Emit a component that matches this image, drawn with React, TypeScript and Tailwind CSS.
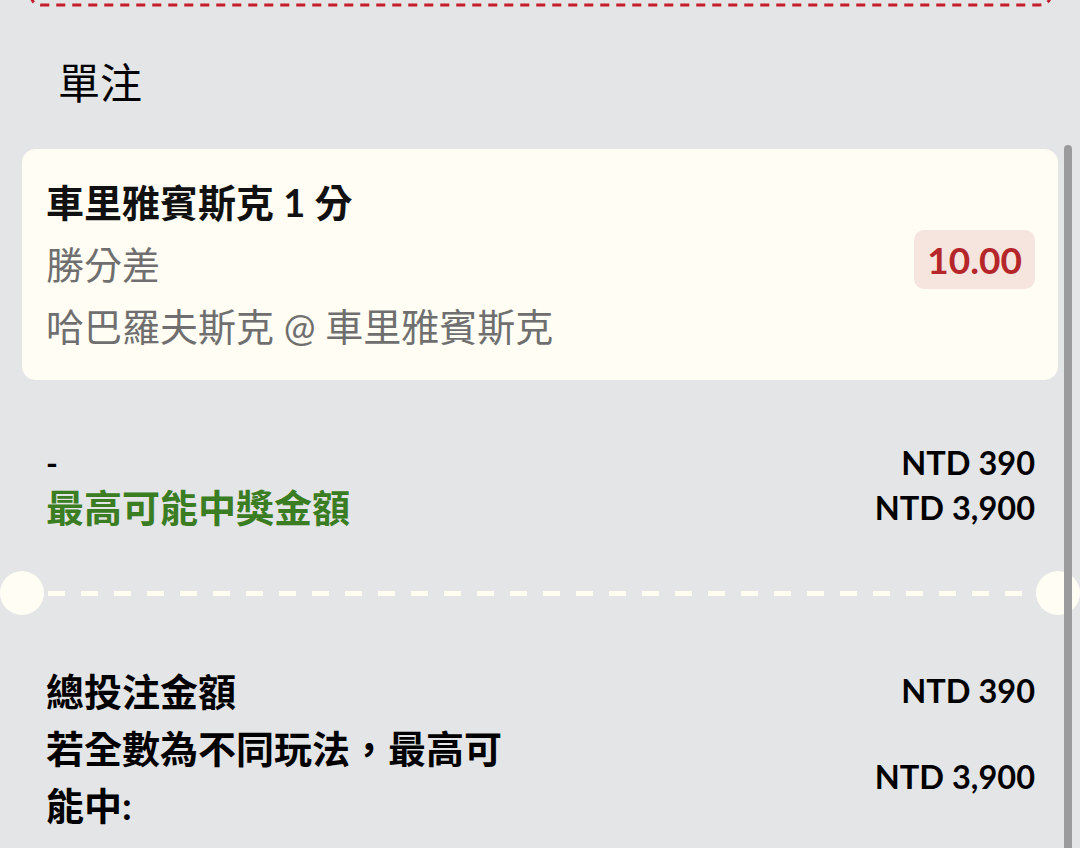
import React from "react";

const FONT = "font-['Lato','Noto_Sans_CJK_TC',sans-serif]";

export default function App() {
  return (
    <div className={`relative w-[1080px] h-[848px] overflow-hidden bg-[#e4e5e7] ${FONT}`}>
      {/* top ticket edge (previous slip) */}
      <svg className="block w-[1080px] h-[7px]" viewBox="0 0 1080 7" fill="none">
        <path
          d="M31 -6 Q31 5 42 5 L1039 5 Q1050 5 1051 -6"
          stroke="#c41d2d"
          strokeWidth="3"
          strokeDasharray="9 7"
          strokeLinecap="butt"
        />
      </svg>

      {/* title */}
      <div className="pl-[58px] mt-[46px] text-[42px] leading-[60px] text-black font-normal">單注</div>

      {/* selection card */}
      <div className="mx-[22px] mt-[36px] rounded-[14px] bg-[#fffdf4] pl-[24px] pr-[23px] pt-[22px] pb-[23px] flex items-center justify-between">
        <div className="flex flex-col text-[38px] leading-[62px]">
          <div className="font-bold text-[#111]">車里雅賓斯克 1 分</div>
          <div className="text-[#6f6f6f]">勝分差</div>
          <div className="text-[#6f6f6f]">哈巴羅夫斯克 @ 車里雅賓斯克</div>
        </div>
        <div className="-mt-[9px] rounded-[10px] bg-[#f6e5df] px-[13px] h-[59px] flex items-center text-[37px] font-bold text-[#b5262a]">
          10.00
        </div>
      </div>

      {/* potential payout */}
      <div className="mt-[60px] pl-[46px] pr-[45px] flex justify-between">
        <div className="flex flex-col leading-[45px]">
          <div className="text-[32px] font-bold text-black">-</div>
          <div className="text-[38px] font-bold text-[#3a7d22]">最高可能中獎金額</div>
        </div>
        <div className="flex flex-col items-end leading-[45px] text-[32.5px] font-bold text-black">
          <div>NTD 390</div>
          <div>NTD 3,900</div>
        </div>
      </div>

      {/* perforation */}
      <div className="mt-[41px] flex items-center">
        <div className="w-[44px] h-[44px] shrink-0 rounded-full bg-[#fffdf4]" />
        <div className="flex-1 mx-[4px] h-[5px] bg-[repeating-linear-gradient(90deg,#fffdf0_0px,#fffdf0_17px,transparent_17px,transparent_33px)]" />
        <div className="w-[44px] h-[44px] shrink-0 rounded-full bg-[#fffdf4]" />
      </div>

      {/* totals */}
      <div className="mt-[47px] pl-[46px] pr-[45px] flex flex-col">
        <div className="flex items-center justify-between">
          <div className="text-[38px] leading-[58px] font-bold text-black">總投注金額</div>
          <div className="text-[32.5px] font-bold text-black">NTD 390</div>
        </div>
        <div className="flex items-center justify-between">
          <div className="max-w-[470px] text-[38px] leading-[57px] font-bold text-black">若全數為不同玩法，最高可能中:</div>
          <div className="text-[32.5px] font-bold text-black">NTD 3,900</div>
        </div>
      </div>

      {/* scrollbar thumb */}
      <div className="absolute left-[1064px] top-[145px] w-[8px] h-[720px] rounded-full bg-[#9b9b9d]" />
    </div>
  );
}
